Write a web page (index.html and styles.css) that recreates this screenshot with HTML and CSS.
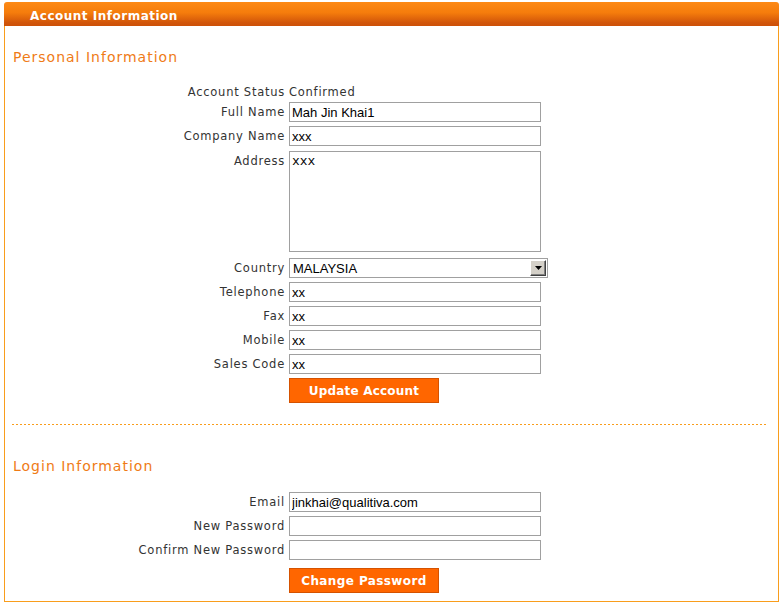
FILE: index.html
```html
<!DOCTYPE html>
<html>
<head>
<meta charset="utf-8">
<link rel="stylesheet" href="styles.css">
</head>
<body>
<div class="panel">
  <div class="panel-head">Account Information</div>
  <div class="panel-body">
    <h2 class="section-title">Personal Information</h2>
    <div class="form personal">
      <div class="row status-row"><span class="label">Account Status</span><span class="value">Confirmed</span></div>
      <div class="row"><span class="label">Full Name</span><input class="field" type="text" value="Mah Jin Khai1"></div>
      <div class="row"><span class="label">Company Name</span><input class="field" type="text" value="xxx"></div>
      <div class="row addr-row"><span class="label">Address</span><textarea class="area">xxx</textarea></div>
      <div class="row country-row"><span class="label">Country</span>
        <span class="select-wrap"><select class="select"><option>MALAYSIA</option></select><span class="select-btn"><svg width="7" height="4" viewBox="0 0 7 4"><path d="M0 0h7L3.5 4z" fill="#000"/></svg></span></span>
      </div>
      <div class="row"><span class="label">Telephone</span><input class="field" type="text" value="xx"></div>
      <div class="row"><span class="label">Fax</span><input class="field" type="text" value="xx"></div>
      <div class="row"><span class="label">Mobile</span><input class="field" type="text" value="xx"></div>
      <div class="row"><span class="label">Sales Code</span><input class="field" type="text" value="xx"></div>
      <div class="row"><span class="label"></span><button class="btn btn-update">Update Account</button></div>
    </div>
    <div class="divider"></div>
    <h2 class="section-title login-title">Login Information</h2>
    <div class="form login">
      <div class="row"><span class="label">Email</span><input class="field" type="text" value="jinkhai@qualitiva.com"></div>
      <div class="row"><span class="label">New Password</span><input class="field" type="password" value=""></div>
      <div class="row"><span class="label">Confirm New Password</span><input class="field" type="password" value=""></div>
      <div class="row btn-row"><span class="label"></span><button class="btn btn-change">Change Password</button></div>
    </div>
  </div>
</div>
</body>
</html>
```
FILE: styles.css
```css
html, body {
  margin: 0;
  padding: 0;
  background: #fff;
}
body {
  font-family: "DejaVu Sans", Verdana, sans-serif;
  font-size: 11.5px;
  letter-spacing: 0.75px;
  color: #333;
}
.panel {
  margin: 2px 0 0 4px;
  width: 775px;
}
.panel-head {
  height: 24px;
  line-height: 24px;
  box-sizing: border-box;
  padding: 2px 0 0 26px;
  color: #fff;
  font-weight: bold;
  font-size: 12px;
  letter-spacing: 0.5px;
  background: linear-gradient(to bottom, #fd8a16 0%, #f57c0c 45%, #d2560a 85%, #cc5008 100%);
  border-radius: 3px 3px 0 0;
}
.panel-body {
  border: 1px solid #f99d1c;
  border-top: none;
  padding: 22px 0 8px 0;
}
.section-title {
  margin: 0 0 0 8px;
  font-size: 14px;
  line-height: 18px;
  font-weight: normal;
  letter-spacing: 1px;
  color: #ef7b16;
}
.form {
  display: flex;
  flex-direction: column;
}
.personal {
  margin-top: 15px;
}
.login {
  margin-top: 18px;
}
.row {
  display: flex;
  align-items: flex-start;
  margin-bottom: 4px;
}
.label {
  width: 280px;
  flex: none;
  text-align: right;
  line-height: 20px;
  margin-right: 4px;
  white-space: nowrap;
}
.status-row {
  margin-top: 1px;
  margin-bottom: 0;
}
.value {
  line-height: 20px;
  color: #333;
}
.field {
  box-sizing: border-box;
  width: 252px;
  height: 20px;
  margin: 0;
  padding: 0 2px;
  border: 1px solid #a0a0a0;
  font-family: "Liberation Sans", Arial, sans-serif;
  font-size: 13px;
  letter-spacing: 0;
  color: #000;
  background: #fff;
  outline: none;
}
.area {
  box-sizing: border-box;
  width: 252px;
  height: 101px;
  margin: 0;
  padding: 2px;
  border: 1px solid #a0a0a0;
  font-family: "Liberation Mono", "Courier New", monospace;
  font-size: 13px;
  letter-spacing: 0;
  color: #000;
  resize: none;
  outline: none;
}
.addr-row {
  margin-top: 1px;
  margin-bottom: 6px;
}
.select-wrap {
  position: relative;
  display: block;
  width: 259px;
  height: 20px;
}
.select {
  box-sizing: border-box;
  width: 259px;
  height: 20px;
  margin: 0;
  padding: 0 3px;
  border: 1px solid #a0a0a0;
  background: #fff;
  font-family: "Liberation Sans", Arial, sans-serif;
  font-size: 13px;
  letter-spacing: 0;
  color: #000;
  -webkit-appearance: none;
  appearance: none;
  outline: none;
}
.select-btn {
  position: absolute;
  right: 2px;
  top: 2px;
  width: 16px;
  height: 16px;
  box-sizing: border-box;
  background: #d4d0c8;
  border-top: 1px solid #fff;
  border-left: 1px solid #fff;
  border-right: 1px solid #404040;
  border-bottom: 1px solid #404040;
  box-shadow: inset -1px -1px 0 #808080;
  display: flex;
  align-items: center;
  justify-content: center;
}
.btn {
  box-sizing: border-box;
  width: 150px;
  height: 25px;
  margin: 0;
  padding: 0;
  background: #ff6600;
  border: 1px solid #d55200;
  color: #fff;
  font-family: "DejaVu Sans", Verdana, sans-serif;
  font-weight: bold;
  font-size: 12px;
  line-height: 22px;
}
.btn-update {
  letter-spacing: 0.2px;
}
.btn-change {
  letter-spacing: 0.4px;
}
.divider {
  margin: 17px 10px 0 7px;
  height: 1px;
  background: repeating-linear-gradient(to right, #f99d1c 0, #f99d1c 2px, transparent 2px, transparent 4px);
}
.login-title {
  margin-top: 32px;
}
.login {
  margin-top: 17px;
}
.btn-row {
  margin-top: 4px;
  margin-bottom: 0;
}
```
